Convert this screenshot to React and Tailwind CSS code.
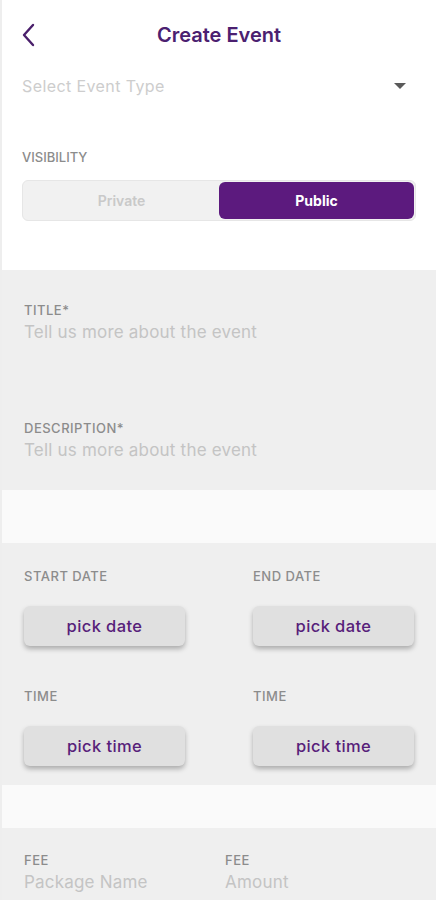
import React from 'react';

const font = { fontFamily: 'Inter, "Open Sans", sans-serif' };

const Label = ({ children }) => (
  <div className="text-[13px] leading-4 font-medium uppercase text-[#8c8c8c] tracking-[0.5px]">{children}</div>
);

const Placeholder = ({ children }) => (
  <div className="text-[17px] leading-5 text-[#c4c4c4] mt-[4px] tracking-[0.2px]">{children}</div>
);

const PickButton = ({ children }) => (
  <button className="w-[161px] h-[40px] rounded-md bg-[#e0e0e0] shadow-[0_3px_5px_rgba(0,0,0,0.28)] text-[16.5px] font-medium text-[#57207a] tracking-[0.4px]">
    {children}
  </button>
);

const App = () => {
  return (
    <div style={font} className="w-full min-h-screen bg-white border-l-2 border-[#eeeeee]">
      {/* header */}
      <div className="grid grid-cols-[50px_1fr_50px] items-center h-[70px]">
        <div className="pl-[18px]">
          <svg width="18" height="26" viewBox="0 0 18 26" fill="none">
            <path d="M13 3 L4 13 L13 23" stroke="#4a1f6b" strokeWidth="2.4" strokeLinecap="round" strokeLinejoin="round" />
          </svg>
        </div>
        <div className="text-center text-[20px] font-semibold text-[#4b2070]">Create Event</div>
        <div />
      </div>

      {/* event type */}
      <div className="flex items-center justify-between pl-[20px] pr-[30px] h-[32px]">
        <span className="text-[16px] text-[#cdcdcd] tracking-[0.4px]">Select Event Type</span>
        <svg width="12" height="7" viewBox="0 0 12 7">
          <path d="M0 0 H12 L6 6 Z" fill="#5a5a5a" />
        </svg>
      </div>

      {/* visibility */}
      <div className="px-[20px] pt-[47px] pb-[49px]">
        <div className="text-[13px] leading-4 font-medium uppercase text-[#8c8c8c]">Visibility</div>
        <div className="mt-[15px] flex h-[41px] rounded-md bg-[#f1f1f1] border border-[#e6e6e6] p-[1px]">
          <button className="flex-1 text-[14px] font-semibold text-[#c9c9c9]">Private</button>
          <button className="flex-1 rounded-md bg-[#5c1a7e] text-[14px] font-bold text-white">Public</button>
        </div>
      </div>

      {/* title / description */}
      <div className="bg-[#efefef] px-[22px] pt-[32px] pb-[30px]">
        <Label>Title*</Label>
        <Placeholder>Tell us more about the event</Placeholder>
        <div className="mt-[78px]">
          <Label>Description*</Label>
          <Placeholder>Tell us more about the event</Placeholder>
        </div>
      </div>

      <div className="h-[53px] bg-[#fafafa]" />

      {/* dates */}
      <div className="bg-[#efefef] px-[22px] pt-[25px] pb-[19px]">
        <div className="grid grid-cols-[229px_1fr]">
          <div>
            <Label>Start Date</Label>
            <div className="mt-[22px]"><PickButton>pick date</PickButton></div>
          </div>
          <div>
            <Label>End Date</Label>
            <div className="mt-[22px]"><PickButton>pick date</PickButton></div>
          </div>
          <div className="mt-[42px]">
            <Label>Time</Label>
            <div className="mt-[22px]"><PickButton>pick time</PickButton></div>
          </div>
          <div className="mt-[42px]">
            <Label>Time</Label>
            <div className="mt-[22px]"><PickButton>pick time</PickButton></div>
          </div>
        </div>
      </div>

      <div className="h-[43px] bg-[#fafafa]" />

      {/* fee */}
      <div className="bg-[#efefef] px-[22px] pt-[24px] pb-[40px]">
        <div className="grid grid-cols-[201px_1fr]">
          <div>
            <Label>Fee</Label>
            <Placeholder>Package Name</Placeholder>
          </div>
          <div>
            <Label>Fee</Label>
            <Placeholder>Amount</Placeholder>
          </div>
        </div>
      </div>
    </div>
  );
};

export default App;
